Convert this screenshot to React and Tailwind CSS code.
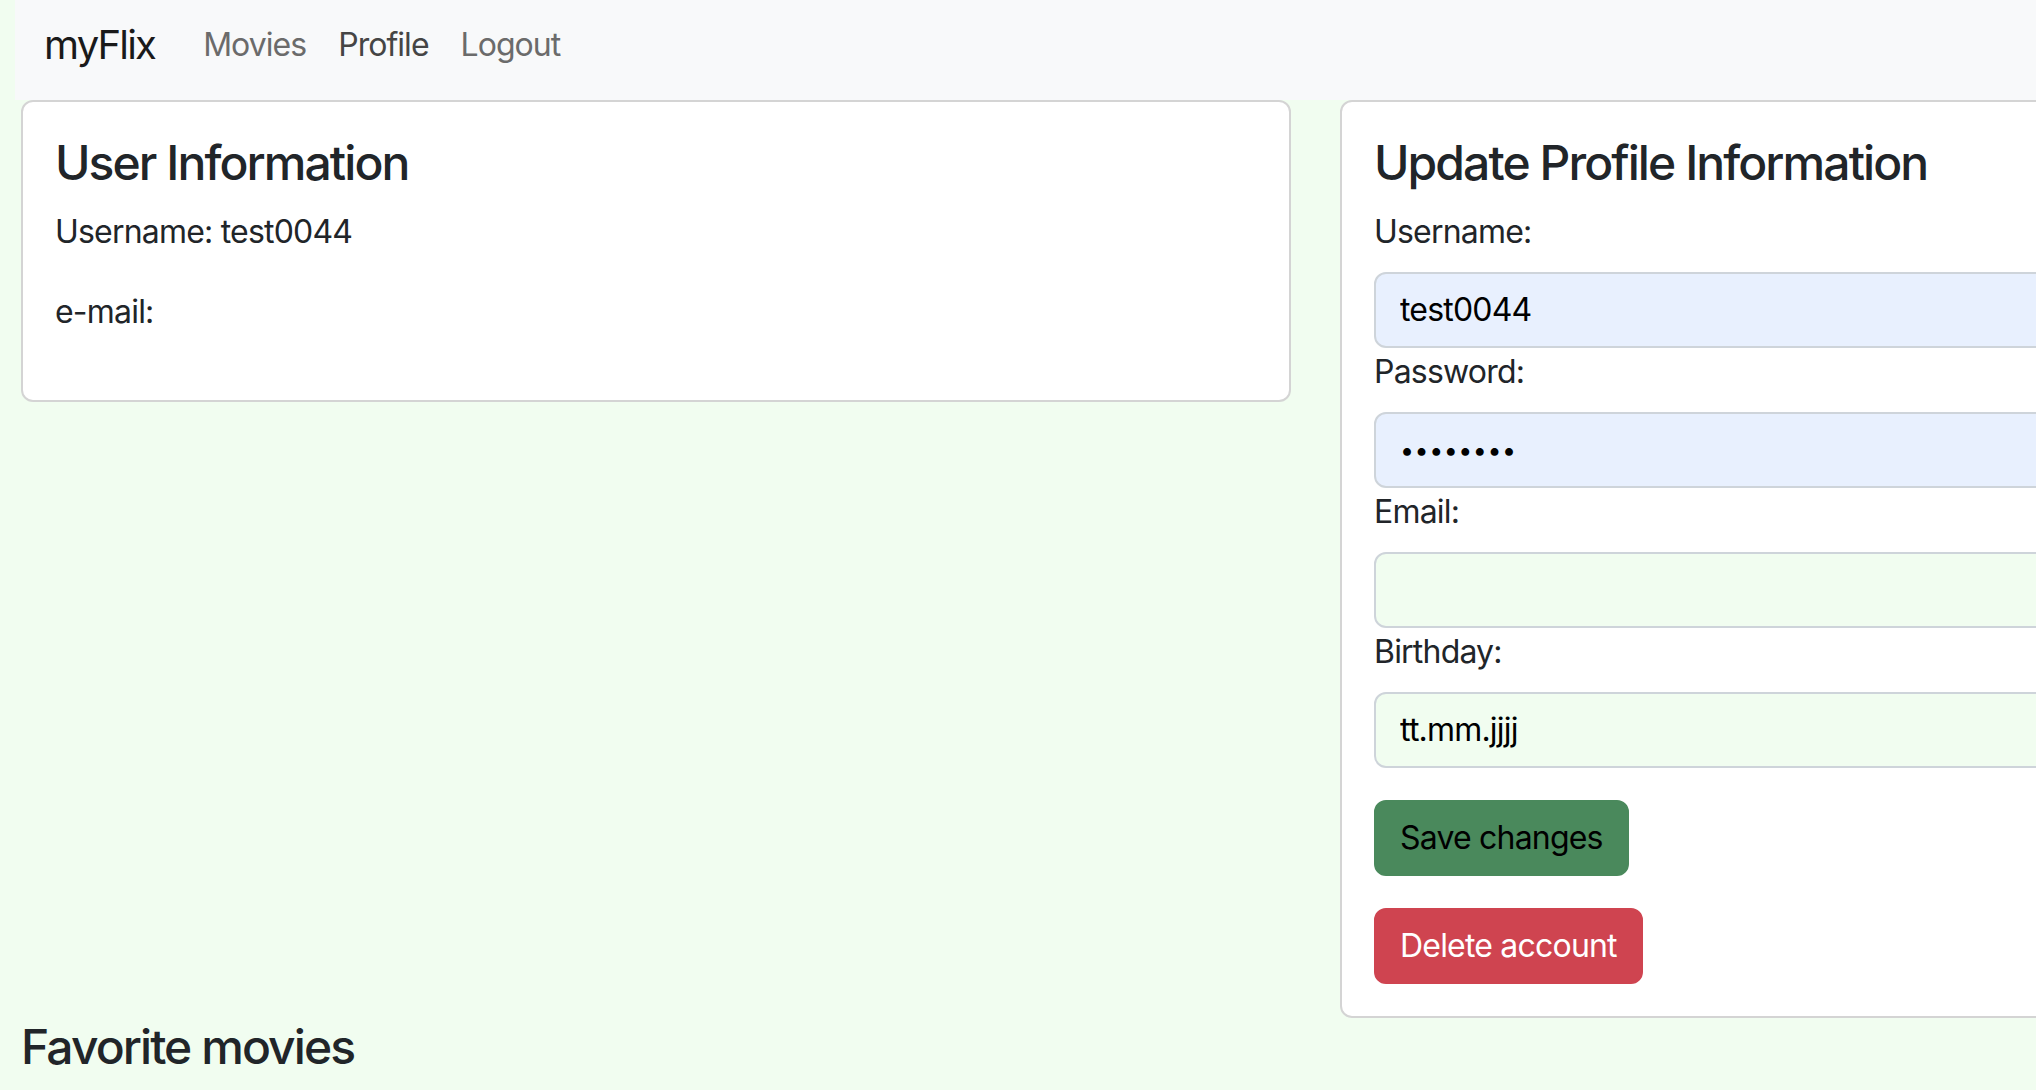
import React from "react";

function Field({ label, value, filled, className = "" }) {
  return (
    <div className="flex flex-col">
      <label className="mb-[16px] text-[32px] leading-[48px] tracking-[-0.025em]">{label}</label>
      <input
        readOnly
        value={value}
        className={`h-[76px] w-full rounded-[12px] border-2 border-[#ced4da] px-[24px] leading-[48px] text-black outline-none ${
          filled ? "bg-[#e8f0fe]" : "bg-[#f1fdf0]"
        } ${className}`}
      />
    </div>
  );
}

export default function App() {
  return (
    <div className="min-h-screen w-full overflow-hidden bg-[#f1fdf0] font-[Inter,sans-serif] text-[#212529]">
      <div className="w-[2640px]">
        <nav className="ml-[15px] flex h-[100px] items-center bg-[#f8f9fa] pb-[10px] pl-[29px]">
          <span className="mr-[32px] text-[40px] leading-[60px] tracking-[-0.045em] text-[#1a1a1a]">myFlix</span>
          <div className="flex items-center text-[32px] leading-[48px] tracking-[-0.03em]">
            <a className="px-[16px] text-[#6b6b6b]">Movies</a>
            <a className="px-[16px] text-[#454545]">Profile</a>
            <a className="px-[16px] text-[#6b6b6b]">Logout</a>
          </div>
        </nav>

        <div className="flex items-start gap-[49px] pl-[21px]">
          <div className="w-[1270px] rounded-[12px] border-2 border-[#d4d4d4] bg-white p-[32px]">
            <h4 className="mb-[16px] text-[48px] font-medium leading-[1.2] tracking-[-0.04em]">User Information</h4>
            <p className="mb-[32px] text-[32px] leading-[48px] tracking-[-0.025em]">Username: test0044</p>
            <p className="mb-[32px] text-[32px] leading-[48px] tracking-[-0.025em]">e-mail:</p>
          </div>

          <div className="w-[1270px] rounded-[12px] border-2 border-[#d4d4d4] bg-white p-[32px]">
            <h4 className="mb-[16px] text-[48px] font-medium leading-[1.2] tracking-[-0.04em]">Update Profile Information</h4>
            <Field label="Username:" value="test0044" filled className="text-[32px] tracking-[-0.025em]" />
            <Field label="Password:" value="••••••••" filled className="text-[25px] tracking-[0.5px]" />
            <Field label="Email:" value="" className="text-[32px]" />
            <Field label="Birthday:" value="tt.mm.jjjj" className="text-[32px] tracking-[-0.025em] text-[#212529]" />
            <div className="mt-[32px]">
              <button className="h-[76px] rounded-[12px] border-2 border-[#4a895c] bg-[#4a895c] px-[24px] text-[32px] leading-[48px] tracking-[-0.025em] text-black">
                Save changes
              </button>
            </div>
            <div className="mt-[32px]">
              <button className="h-[76px] rounded-[12px] border-2 border-[#cf4450] bg-[#cf4450] px-[24px] text-[32px] leading-[48px] tracking-[-0.025em] text-white">
                Delete account
              </button>
            </div>
          </div>
        </div>

        <h4 className="pl-[21px] text-[48px] font-medium leading-[1.2] tracking-[-0.04em]">Favorite movies</h4>
      </div>
    </div>
  );
}
